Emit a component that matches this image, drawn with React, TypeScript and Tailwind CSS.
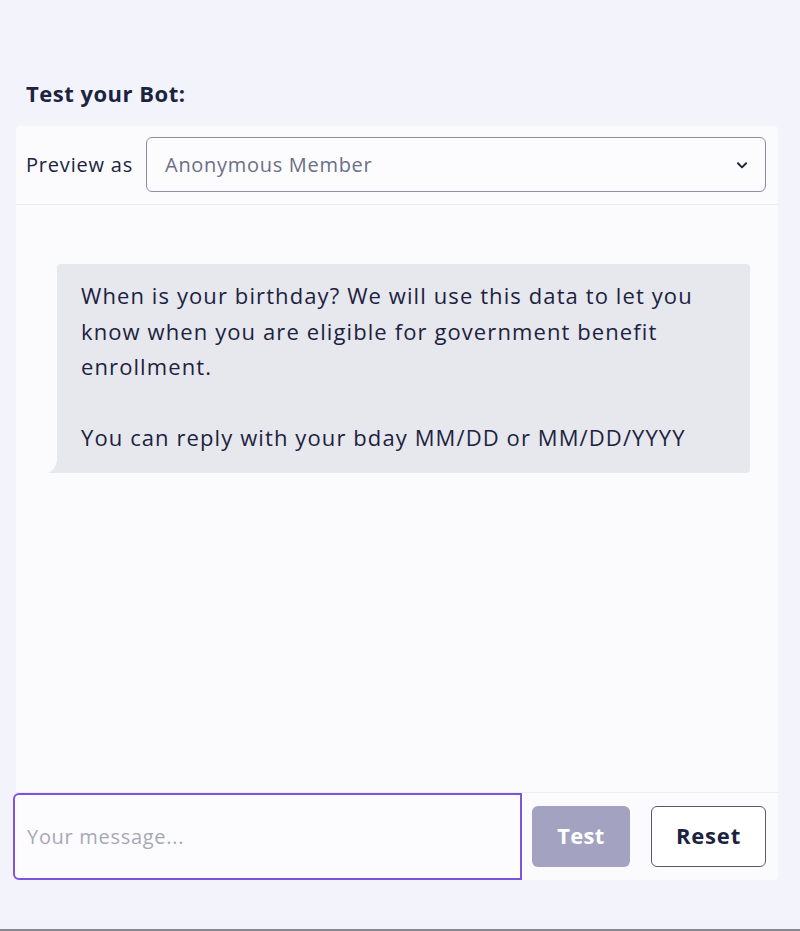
import React from "react";

export default function App() {
  const font = { fontFamily: '"Open Sans", "Noto Sans", sans-serif' };
  return (
    <div className="w-[800px] h-[931px] bg-[#f3f3fb] text-[#1c2340] border-b-2 border-[#8a8a92] box-border" style={font}>
      <div className="pt-[78px] pl-[16px] pr-[22px]">
        <h2 className="pl-[10px] text-[22px] font-bold leading-[30px] tracking-[0.5px] text-[#1c2340]">Test your Bot:</h2>
        <div className="mt-[18px] bg-[#fbfbfe] rounded-[4px] flex flex-col h-[754px]">
          <div className="flex items-center gap-[13px] pl-[10px] pr-[12px] pt-[11px] pb-[12px] border-b border-[#ececf2]">
            <span className="text-[20px] tracking-[0.8px] text-[#1c2340]">Preview as</span>
            <div className="flex-1 h-[55px] border border-[#8e8ca6] rounded-[6px] bg-[#fcfcfe] flex items-center justify-between pl-[18px] pr-[16px]">
              <span className="text-[20px] text-[#6b6f86] tracking-[0.7px]">Anonymous Member</span>
              <svg width="14" height="14" viewBox="0 0 24 24" fill="none" stroke="#1c2340" strokeWidth="3.2" strokeLinecap="round" strokeLinejoin="round">
                <path d="M5 9l7 7 7-7" />
              </svg>
            </div>
          </div>
          <div className="flex-1 pt-[59px] pl-[32px] pr-[28px]">
            <div className="relative">
              <div className="ml-[9px] bg-[#e7e7ee] rounded-[4px] pl-[24px] pr-[20px] pt-[14px] pb-[17px] text-[22px] leading-[35.5px] text-[#1c2340] tracking-[1.1px]">
                <p>When is your birthday? We will use this data to let you know when you are eligible for government benefit enrollment.</p>
                <p className="mt-[35.5px]">You can reply with your bday MM/DD or MM/DD/YYYY</p>
              </div>
              <svg className="absolute left-0 bottom-0" width="14" height="12" viewBox="0 0 14 12">
                <path d="M9 0 L14 0 L14 12 L0 12 Q7 9 9 0 Z" fill="#e7e7ee" />
              </svg>
            </div>
          </div>
          <div className="flex items-center border-t border-[#ececf2]">
            <div className="ml-[-3px] w-[509px] h-[87px] border-2 border-[#7b55dc] rounded-l-[6px] bg-[#fcfcff] flex items-center pl-[12px]">
              <span className="text-[20px] tracking-[0.7px] text-[#a8a8b4]">Your message...</span>
            </div>
            <button className="ml-[10px] w-[98px] h-[61px] rounded-[6px] bg-[#a3a2c0] text-white text-[22px] font-bold tracking-[0.3px] pb-[2px]">Test</button>
            <button className="ml-[21px] w-[115px] h-[61px] rounded-[6px] border border-[#585a6c] bg-white text-[#1c2340] text-[22px] font-bold tracking-[0.8px] pb-[2px]">Reset</button>
          </div>
        </div>
      </div>
    </div>
  );
}
